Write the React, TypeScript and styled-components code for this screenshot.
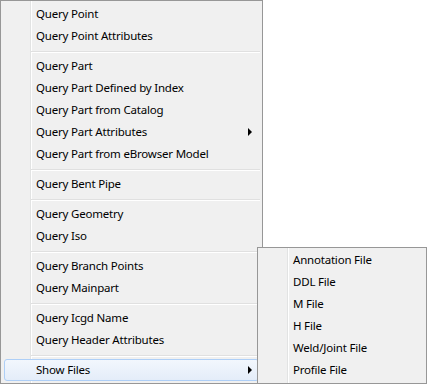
import React from "react";
import styled, { createGlobalStyle } from "styled-components";

const Global = createGlobalStyle`
  html, body { margin: 0; padding: 0; background: #ffffff; }
  body { font-family: "Noto Sans", "Open Sans", sans-serif; }
`;

const Stage = styled.div`
  position: relative;
  width: 428px;
  height: 384px;
  overflow: hidden;
`;

const Menu = styled.div<{ $floating?: boolean }>`
  box-sizing: border-box;
  display: flex;
  flex-direction: column;
  border: 1px solid #979797;
  padding: ${(p) => (p.$floating ? "1px 2px 2px 2px" : "2px")};
  background: linear-gradient(
    to right,
    #f0f0f0 0,
    #f0f0f0 29px,
    #e2e3e3 29px,
    #e2e3e3 30px,
    #ffffff 30px,
    #ffffff 31px,
    #f0f0f0 31px
  );
  ${(p) =>
    p.$floating
      ? `position: absolute; left: 257px; top: 247px; width: 170px; height: 137px;`
      : `width: 263px; height: 384px;`}
`;

const Item = styled.div<{ $hot?: boolean }>`
  box-sizing: border-box;
  position: relative;
  display: flex;
  align-items: center;
  height: 22px;
  padding-left: 32px;
  padding-right: 6px;
  font-size: 11.5px;
  letter-spacing: -0.2px;
  color: #000;
  white-space: nowrap;
  border-radius: 3px;
  border: 1px solid transparent;
  margin: 0 1px 0 0;
  ${(p) =>
    p.$hot
      ? `border-color: #aecff7;
         background: linear-gradient(to bottom, #f2f7fd, #e4edf9);
         margin: 0 1px;
         padding-left: 31px;`
      : ""}
`;

const Label = styled.span`
  flex: 1;
  line-height: 20px;
`;

const Arrow = styled.span`
  width: 0;
  height: 0;
  border-top: 4px solid transparent;
  border-bottom: 4px solid transparent;
  border-left: 4px solid #000;
`;

const Separator = styled.div`
  height: 8px;
  margin-left: 28px;
  margin-right: 0;
  box-sizing: border-box;
  padding-top: 4px;
  &::before {
    content: "";
    display: block;
    height: 1px;
    background: #e0e0e0;
    border-bottom: 1px solid #ffffff;
  }
`;

type Entry = { label: string; sub?: boolean; hot?: boolean } | "sep";

const mainEntries: Entry[] = [
  { label: "Query Point" },
  { label: "Query Point Attributes" },
  "sep",
  { label: "Query Part" },
  { label: "Query Part Defined by Index" },
  { label: "Query Part from Catalog" },
  { label: "Query Part Attributes", sub: true },
  { label: "Query Part from eBrowser Model" },
  "sep",
  { label: "Query Bent Pipe" },
  "sep",
  { label: "Query Geometry" },
  { label: "Query Iso" },
  "sep",
  { label: "Query Branch Points" },
  { label: "Query Mainpart" },
  "sep",
  { label: "Query Icgd Name" },
  { label: "Query Header Attributes" },
  "sep",
  { label: "Show Files", sub: true, hot: true },
];

const subEntries: Entry[] = [
  { label: "Annotation File" },
  { label: "DDL File" },
  { label: "M File" },
  { label: "H File" },
  { label: "Weld/Joint File" },
  { label: "Profile File" },
];

const renderEntries = (entries: Entry[]) =>
  entries.map((e, i) =>
    e === "sep" ? (
      <Separator key={i} />
    ) : (
      <Item key={i} $hot={e.hot}>
        <Label>{e.label}</Label>
        {e.sub && <Arrow />}
      </Item>
    )
  );

export default function App() {
  return (
    <>
      <Global />
      <Stage>
        <Menu>{renderEntries(mainEntries)}</Menu>
        <Menu $floating>{renderEntries(subEntries)}</Menu>
      </Stage>
    </>
  );
}
